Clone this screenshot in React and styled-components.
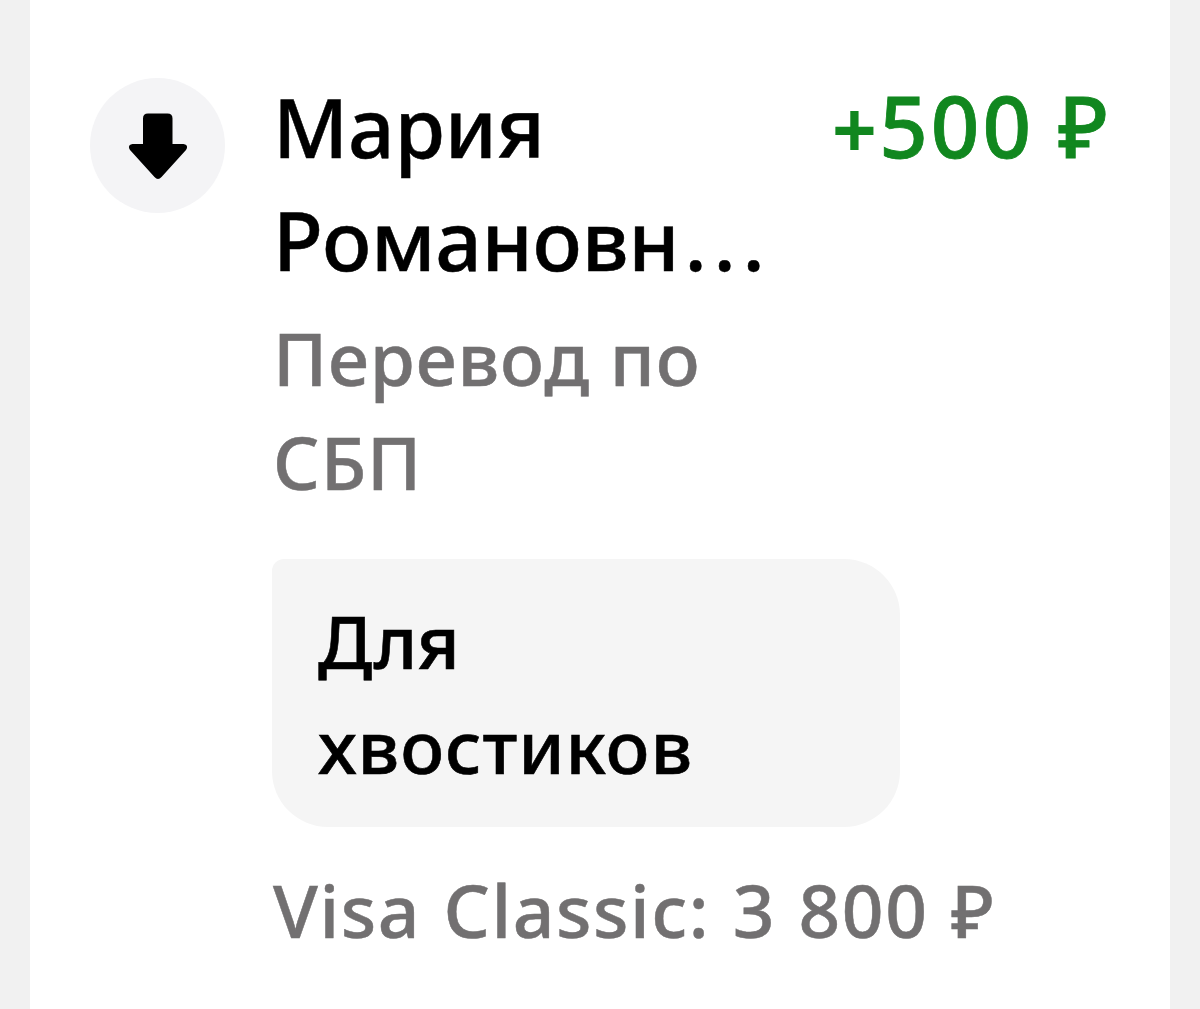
import React from 'react';
import styled, { createGlobalStyle } from 'styled-components';

const GlobalStyle = createGlobalStyle`
  * {
    box-sizing: border-box;
  }
  body {
    margin: 0;
    background: #f1f1f1;
    font-family: 'Noto Sans', 'Open Sans', sans-serif;
  }
`;

const Page = styled.div`
  height: 1009px;
  padding: 0 30px;
  overflow: hidden;
  background: #f1f1f1;
`;

const Card = styled.article`
  display: flex;
  height: 100%;
  padding: 78px 62px 0 60px;
  background: #fff;
`;

const IconCircle = styled.div`
  display: flex;
  flex: none;
  align-items: center;
  justify-content: center;
  width: 135px;
  height: 135px;
  border-radius: 50%;
  background: #f4f4f6;
`;

const Details = styled.div`
  flex: 1;
  min-width: 0;
  padding-left: 47px;
  font-weight: 500;
  -webkit-text-stroke: 0.5px currentColor;
`;

const Header = styled.div`
  display: flex;
  justify-content: space-between;
  margin-top: -8px;
`;

const Line = styled.span`
  display: block;
  width: max-content;
  white-space: pre;
  font-size: ${props => props.$size}px;
  letter-spacing: ${props => props.$spacing || 0}px;
  word-spacing: ${props => props.$word || 0}px;
`;

const Name = styled.div`
  padding-left: 1px;
  color: #000;
  line-height: 113px;
`;

const Ellipsis = styled.span`
  margin-left: 5px;
  letter-spacing: 6.7px;
`;

const Amount = styled.div`
  margin-top: -1px;
  margin-right: -3px;
  color: #11871f;
  line-height: 113px;
  -webkit-text-stroke-width: 0.8px;
`;

const Sign = styled.span`
  font-size: 76px;
  -webkit-text-stroke-width: 2px;
`;

const Muted = styled.div`
  margin-top: ${props => props.$top}px;
  padding-left: 1px;
  color: #727071;
  line-height: 104px;
`;

const Message = styled.div`
  width: 628px;
  height: 268px;
  margin-top: 45px;
  padding: 29px 46px;
  border-radius: 12px 56px 56px 56px;
  background: #f5f5f5;
  color: #000;
  line-height: 105px;
  -webkit-text-stroke-width: 0.6px;
`;

const ArrowDown = () => (
  <svg width="60" height="68" viewBox="0 0 60 68">
    <path d="M20 1.500H39.500Q44.500 1.500 44.500 6.500V32H55.500Q61 33 58 38L33.500 65Q30 69 26.500 65L2 38Q-1 33 4.500 32H15V6.500Q15 1.500 20 1.500Z" />
  </svg>
);

const App = () => (
  <Page>
    <GlobalStyle />
    <Card>
      <IconCircle>
        <ArrowDown />
      </IconCircle>
      <Details>
        <Header>
          <Name>
            <Line $size={82} $spacing={-0.2}>Мария</Line>
            <Line $size={82} $spacing={-0.3}>
              Романовн<Ellipsis>...</Ellipsis>
            </Line>
          </Name>
          <Amount>
            <Line $size={85} $spacing={3} $word={-1}>
              <Sign>+</Sign>500 ₽
            </Line>
          </Amount>
        </Header>
        <Muted $top={10}>
          <Line $size={73} $spacing={0.85}>Перевод по</Line>
          <Line $size={73} $spacing={0.85}>СБП</Line>
        </Muted>
        <Message>
          <Line $size={73} $spacing={-0.6}>Для</Line>
          <Line $size={73} $spacing={0.85}>хвостиков</Line>
        </Message>
        <Muted $top={31}>
          <Line $size={73} $spacing={1.55} $word={2}>Visa Classic: 3 800 ₽</Line>
        </Muted>
      </Details>
    </Card>
  </Page>
);

export default App;
